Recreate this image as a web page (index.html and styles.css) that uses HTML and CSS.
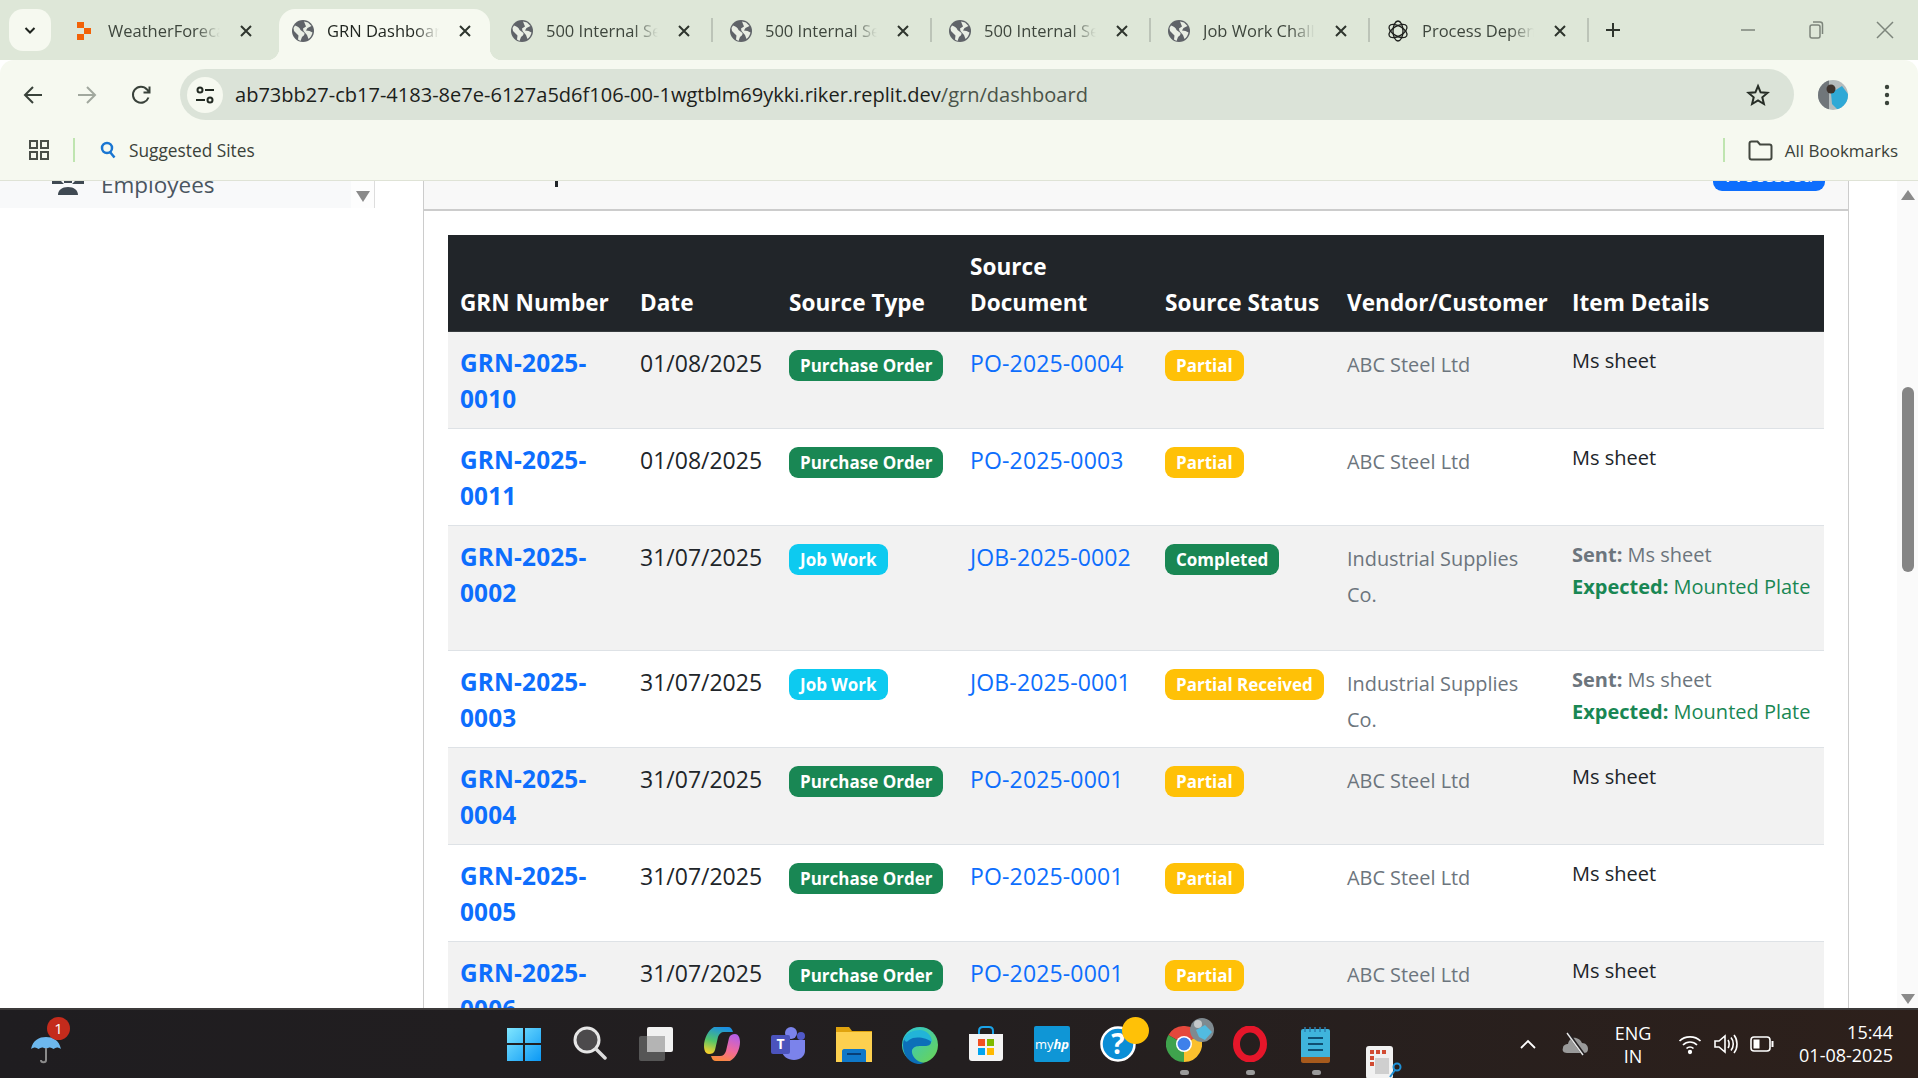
FILE: index.html
```html
<!DOCTYPE html>
<html lang="en">
<head>
  <meta charset="UTF-8">
  <meta name="viewport" content="width=device-width, initial-scale=1.0">
  <title>GRN Dashboard</title>
  <link rel="stylesheet" href="styles.css">
</head>
<body>

  <svg class="defs" width="0" height="0">
    <symbol id="globe" viewBox="0 0 22 22">
      <circle cx="11" cy="11" r="11" fill="#5f6368"/>
      <path d="M3 5.500C5.500 6 8 8 8.500 10L12.500 13C13 15 11 16 10 17L8.500 21L6 19.500L6.500 15.500L2 11L1.500 8ZM12 1.500L16 2.500L19.500 6L15.500 8L14 10.500L17.500 11L20.500 12.500C20 15 18.500 17.500 16.500 19L15 15L11.500 11L11 8.500L14 6.500Z" fill="#e9eee4"/>
    </symbol>
    <symbol id="close" viewBox="0 0 14 14">
      <path d="M2 2L12 12M12 2L2 12" stroke="#2e352d" stroke-width="2" fill="none"/>
    </symbol>
  </svg>

  <!-- Tab strip -->
  <div class="tabstrip">
    <div class="tab-search">
      <svg width="14" height="14" viewBox="0 0 14 14"><path d="M2.500 5L7 9.500L11.500 5" stroke="#1f241e" stroke-width="2" fill="none"/></svg>
    </div>
    <div class="tab">
      <svg class="tab-icon" width="22" height="22" viewBox="0 0 22 22"><path d="M4 2H11V8H18V14H11V20H4V14H11V8H4Z" fill="#f26207"/></svg>
      <span class="tab-title">WeatherForecast</span>
      <svg class="tab-close" width="14" height="14"><use href="#close"/></svg>
    </div>
    <div class="tab tab-active">
      <svg class="tab-icon" width="22" height="22"><use href="#globe"/></svg>
      <span class="tab-title">GRN Dashboard</span>
      <svg class="tab-close" width="14" height="14"><use href="#close"/></svg>
    </div>
    <div class="tab tab-sep">
      <svg class="tab-icon" width="22" height="22"><use href="#globe"/></svg>
      <span class="tab-title">500 Internal Server</span>
      <svg class="tab-close" width="14" height="14"><use href="#close"/></svg>
    </div>
    <div class="tab tab-sep">
      <svg class="tab-icon" width="22" height="22"><use href="#globe"/></svg>
      <span class="tab-title">500 Internal Server</span>
      <svg class="tab-close" width="14" height="14"><use href="#close"/></svg>
    </div>
    <div class="tab tab-sep">
      <svg class="tab-icon" width="22" height="22"><use href="#globe"/></svg>
      <span class="tab-title">500 Internal Server</span>
      <svg class="tab-close" width="14" height="14"><use href="#close"/></svg>
    </div>
    <div class="tab tab-sep">
      <svg class="tab-icon" width="22" height="22"><use href="#globe"/></svg>
      <span class="tab-title">Job Work Challan</span>
      <svg class="tab-close" width="14" height="14"><use href="#close"/></svg>
    </div>
    <div class="tab tab-sep">
      <svg class="tab-icon" width="22" height="22" viewBox="0 0 22 22" fill="none" stroke="#1d1f1c" stroke-width="1.300">
        <ellipse cx="11" cy="11" rx="5" ry="10"/>
        <ellipse cx="11" cy="11" rx="5" ry="10" transform="rotate(60 11 11)"/>
        <ellipse cx="11" cy="11" rx="5" ry="10" transform="rotate(120 11 11)"/>
      </svg>
      <span class="tab-title">Process Dependency</span>
      <svg class="tab-close" width="14" height="14"><use href="#close"/></svg>
    </div>
    <svg class="new-tab" width="18" height="18" viewBox="0 0 18 18"><path d="M9 2V16M2 9H16" stroke="#2e352d" stroke-width="2"/></svg>
    <div class="window-btns">
      <svg width="16" height="16" viewBox="0 0 16 16"><path d="M1 8H15" stroke="#7d857b" stroke-width="1.500"/></svg>
      <svg width="16" height="18" viewBox="0 0 16 18" fill="none" stroke="#7d857b" stroke-width="1.500"><rect x="2" y="4" width="10" height="13" rx="2"/><path d="M5 1H12C13.500 1 14.500 2 14.500 3.500V13"/></svg>
      <svg width="18" height="18" viewBox="0 0 18 18"><path d="M1 1L17 17M17 1L1 17" stroke="#7d857b" stroke-width="1.500"/></svg>
    </div>
  </div>

  <!-- Address bar -->
  <div class="toolbar">
    <div class="nav-btns">
      <svg width="22" height="22" viewBox="0 0 22 22" fill="none" stroke="#39423a" stroke-width="2"><path d="M20 11H3M11 3L3 11L11 19"/></svg>
      <svg width="22" height="22" viewBox="0 0 22 22" fill="none" stroke="#a1a89e" stroke-width="2"><path d="M2 11H19M11 3L19 11L11 19"/></svg>
      <svg width="22" height="22" viewBox="0 0 22 22" fill="none" stroke="#39423a" stroke-width="2"><path d="M18.500 13.500A8 8 0 1 1 17 5.500L19 8M19.500 2.500V8.500H13.500"/></svg>
    </div>
    <div class="omnibox">
      <div class="site-info">
        <svg width="20" height="20" viewBox="0 0 20 20" fill="none" stroke="#222a22" stroke-width="2"><circle cx="5" cy="5" r="2.500"/><path d="M10 5H19M1 15H10"/><circle cx="15" cy="15" r="2.500"/></svg>
      </div>
      <span class="url">ab73bb27-cb17-4183-8e7e-6127a5d6f106-00-1wgtblm69ykki.riker.replit.dev<span class="url-path">/grn/dashboard</span></span>
      <svg class="star" width="24" height="24" viewBox="0 0 24 24"><path d="M12 3L14.600 9.300L21.500 9.900L16.300 14.300L17.900 21L12 17.400L6.100 21L7.700 14.300L2.500 9.900L9.400 9.300Z" fill="none" stroke="#262d26" stroke-width="2"/></svg>
    </div>
    <svg class="avatar" width="30" height="30" viewBox="0 0 30 30">
      <defs><clipPath id="avatarClip"><circle cx="15" cy="15" r="15"/></clipPath></defs>
      <g clip-path="url(#avatarClip)">
        <rect width="30" height="30" fill="#b5bcbd"/>
        <rect width="11" height="30" fill="#70767a"/>
        <path d="M13 13L24 6L30 14V26L20 30L14 24Z" fill="#2fa9d6"/>
        <circle cx="13" cy="9" r="4.500" fill="#3d332d"/>
      </g>
    </svg>
    <svg class="menu-dots" width="6" height="22" viewBox="0 0 6 22"><circle cx="3" cy="3" r="2.200" fill="#3a433a"/><circle cx="3" cy="11" r="2.200" fill="#3a433a"/><circle cx="3" cy="19" r="2.200" fill="#3a433a"/></svg>
  </div>

  <!-- Bookmarks -->
  <div class="bookmarks">
    <svg width="22" height="22" viewBox="0 0 22 22" fill="none" stroke="#4a4f49" stroke-width="2"><rect x="2" y="2" width="7" height="7"/><rect x="13" y="2" width="7" height="7"/><rect x="2" y="13" width="7" height="7"/><rect x="13" y="13" width="7" height="7"/></svg>
    <div class="bm-sep bm-sep-left"></div>
    <svg width="16" height="18" viewBox="0 0 16 18" fill="none" stroke="#1976d2" stroke-width="2.500"><circle cx="7" cy="7" r="5"/><path d="M10 11L14.500 16.500"/></svg>
    <span class="bm-text">Suggested Sites</span>
    <div class="bm-sep bm-sep-right"></div>
    <svg width="25" height="21" viewBox="0 0 25 21" fill="none" stroke="#42473f" stroke-width="2"><path d="M1.500 3.500C1.500 2 2.500 1.500 3.500 1.500H9.500L12 4.500H21.500C23 4.500 23.500 5.500 23.500 6.500V17.500C23.500 19 22.500 19.500 21.500 19.500H3.500C2.500 19.500 1.500 19 1.500 17.500Z"/></svg>
    <span class="bm-text bm-text-all">All Bookmarks</span>
  </div>

  <!-- Page -->
  <div class="page">
    <aside class="sidebar">
      <div class="side-item">
        <div class="side-link">
          <svg width="32" height="14" viewBox="0 0 32 14" fill="#3f4952"><path d="M0 0H9L12 3H0ZM32 0H23L20 3H32ZM12 0H20V2H12ZM6 14C6 9 10 6 16 6C22 6 26 9 26 14Z"/></svg>
          <span>Employees</span>
        </div>
        <div class="side-scroll"></div>
      </div>
    </aside>

    <main class="main">
      <div class="card">
        <div class="card-header">
          <span class="title-tick"></span>
          <button class="btn-primary">Processed</button>
        </div>
        <div class="card-body">
          <table class="grn-table">
            <colgroup>
              <col class="col-grn"><col class="col-date"><col class="col-type"><col class="col-doc"><col class="col-status"><col class="col-vendor"><col>
            </colgroup>
            <thead>
              <tr>
                <th>GRN Number</th>
                <th>Date</th>
                <th>Source Type</th>
                <th>Source<br>Document</th>
                <th>Source Status</th>
                <th>Vendor/Customer</th>
                <th>Item Details</th>
              </tr>
            </thead>
            <tbody>
              <tr>
                <td class="cell-grn"><a href="#">GRN-2025-0010</a></td>
                <td>01/08/2025</td>
                <td><span class="badge badge-green">Purchase Order</span></td>
                <td><a href="#">PO-2025-0004</a></td>
                <td><span class="badge badge-yellow">Partial</span></td>
                <td class="cell-vendor">ABC Steel Ltd</td>
                <td><div class="item-line">Ms sheet</div></td>
              </tr>
              <tr>
                <td class="cell-grn"><a href="#">GRN-2025-0011</a></td>
                <td>01/08/2025</td>
                <td><span class="badge badge-green">Purchase Order</span></td>
                <td><a href="#">PO-2025-0003</a></td>
                <td><span class="badge badge-yellow">Partial</span></td>
                <td class="cell-vendor">ABC Steel Ltd</td>
                <td><div class="item-line">Ms sheet</div></td>
              </tr>
              <tr>
                <td class="cell-grn"><a href="#">GRN-2025-0002</a></td>
                <td>31/07/2025</td>
                <td><span class="badge badge-cyan">Job Work</span></td>
                <td><a href="#">JOB-2025-0002</a></td>
                <td><span class="badge badge-green">Completed</span></td>
                <td class="cell-vendor">Industrial Supplies Co.</td>
                <td>
                  <div class="item-line muted"><strong>Sent:</strong> Ms sheet</div>
                  <div class="item-line expected"><strong>Expected:</strong> Mounted Plate</div>
                  <div class="item-gap"></div>
                </td>
              </tr>
              <tr>
                <td class="cell-grn"><a href="#">GRN-2025-0003</a></td>
                <td>31/07/2025</td>
                <td><span class="badge badge-cyan">Job Work</span></td>
                <td><a href="#">JOB-2025-0001</a></td>
                <td><span class="badge badge-yellow">Partial Received</span></td>
                <td class="cell-vendor">Industrial Supplies Co.</td>
                <td>
                  <div class="item-line muted"><strong>Sent:</strong> Ms sheet</div>
                  <div class="item-line expected"><strong>Expected:</strong> Mounted Plate</div>
                </td>
              </tr>
              <tr>
                <td class="cell-grn"><a href="#">GRN-2025-0004</a></td>
                <td>31/07/2025</td>
                <td><span class="badge badge-green">Purchase Order</span></td>
                <td><a href="#">PO-2025-0001</a></td>
                <td><span class="badge badge-yellow">Partial</span></td>
                <td class="cell-vendor">ABC Steel Ltd</td>
                <td><div class="item-line">Ms sheet</div></td>
              </tr>
              <tr>
                <td class="cell-grn"><a href="#">GRN-2025-0005</a></td>
                <td>31/07/2025</td>
                <td><span class="badge badge-green">Purchase Order</span></td>
                <td><a href="#">PO-2025-0001</a></td>
                <td><span class="badge badge-yellow">Partial</span></td>
                <td class="cell-vendor">ABC Steel Ltd</td>
                <td><div class="item-line">Ms sheet</div></td>
              </tr>
              <tr>
                <td class="cell-grn"><a href="#">GRN-2025-0006</a></td>
                <td>31/07/2025</td>
                <td><span class="badge badge-green">Purchase Order</span></td>
                <td><a href="#">PO-2025-0001</a></td>
                <td><span class="badge badge-yellow">Partial</span></td>
                <td class="cell-vendor">ABC Steel Ltd</td>
                <td><div class="item-line">Ms sheet</div></td>
              </tr>
            </tbody>
          </table>
        </div>
      </div>
    </main>

    <div class="scrollbar">
      <span class="arrow-up"></span>
      <span class="thumb"></span>
      <span class="arrow-down"></span>
    </div>
  </div>

  <!-- Taskbar -->
  <footer class="taskbar">
    <div class="weather">
      <svg width="32" height="32" viewBox="0 0 32 32">
        <path d="M1 17C3 8 9 5 16 5C23 5 29 8 31 17C28 15 26 15 23.500 17C21 15 19 15 16 17C13 15 11 15 8.500 17C6 15 4 15 1 17Z" fill="#6db8ee"/>
        <path d="M16 16V28C16 31 11 31 11 28" stroke="#8a8a8a" stroke-width="2" fill="none"/>
      </svg>
      <span class="weather-badge">1</span>
    </div>

    <div class="apps">
      <div class="app">
        <svg width="36" height="36" viewBox="0 0 36 36">
          <defs><linearGradient id="winGrad" x1="0" y1="0" x2="1" y2="1"><stop offset="0" stop-color="#7fe6ff"/><stop offset="1" stop-color="#0b98f5"/></linearGradient></defs>
          <path d="M1 2H17V17H1ZM19 2H35V17H19ZM1 19H17V35H1ZM19 19H35V35H19Z" fill="url(#winGrad)"/>
        </svg>
      </div>
      <div class="app">
        <svg width="34" height="34" viewBox="0 0 34 34" fill="none"><circle cx="14" cy="14" r="12" fill="#4c4a4c" stroke="#e6e6e6" stroke-width="3"/><path d="M23 23L32 32" stroke="#dcdcdc" stroke-width="3.500" stroke-linecap="round"/></svg>
      </div>
      <div class="app">
        <svg width="36" height="36" viewBox="0 0 36 36"><rect x="9" y="1" width="26" height="25" rx="2" fill="#f1f1f1"/><rect x="1" y="10" width="26" height="25" rx="2" fill="#5c5c5c" fill-opacity="0.900"/><rect x="9" y="10" width="18" height="16" fill="#b4b4b4"/></svg>
      </div>
      <div class="app">
        <svg width="36" height="36" viewBox="0 0 36 36">
          <defs>
            <linearGradient id="copLeft" x1="0.600" y1="0" x2="0.300" y2="1"><stop offset="0" stop-color="#1b8fe2"/><stop offset="0.550" stop-color="#52c46a"/><stop offset="1" stop-color="#f5d02c"/></linearGradient>
            <linearGradient id="copRight" x1="0.700" y1="0" x2="0.300" y2="1"><stop offset="0" stop-color="#b45fe6"/><stop offset="0.550" stop-color="#f26a9a"/><stop offset="1" stop-color="#f98a3c"/></linearGradient>
          </defs>
          <path d="M10 1H24C27 1 28 3 29 6H20C17 6 15 8 14 11L11 24C10 27 8 28 5 28C2 28 0 25 0 20C0 13 4 4 10 1Z" fill="url(#copLeft)"/>
          <path d="M26 35H12C9 35 8 33 7 30H16C19 30 21 28 22 25L25 12C26 9 28 8 31 8C34 8 36 11 36 16C36 23 32 32 26 35Z" fill="url(#copRight)"/>
        </svg>
      </div>
      <div class="app">
        <svg width="36" height="36" viewBox="0 0 36 36"><circle cx="21" cy="7" r="6" fill="#7b83eb"/><circle cx="31" cy="10" r="4" fill="#5059c9"/><path d="M12 14H35V25C35 30 30 34 24 34C18 34 12 30 12 25Z" fill="#7b83eb"/><rect x="1" y="9" width="19" height="19" rx="2" fill="#4b53bc"/><text class="teams-t" x="10.500" y="23">T</text></svg>
      </div>
      <div class="app">
        <svg width="36" height="36" viewBox="0 0 36 36"><path d="M0 1H13L16 5H36V12H0Z" fill="#e0a30e"/><rect y="6" width="36" height="30" fill="#fdd04f"/><path d="M6 36V25C6 24 7 23 8 23H28C29 23 30 24 30 25V36Z" fill="#0f78c9"/><rect x="11" y="27" width="14" height="2" fill="#083f76"/></svg>
      </div>
      <div class="app">
        <svg width="38" height="38" viewBox="0 0 38 38">
          <defs><linearGradient id="edgeGrad" x1="0" y1="0" x2="1" y2="1"><stop offset="0" stop-color="#29c6dc"/><stop offset="1" stop-color="#6ed44d"/></linearGradient></defs>
          <circle cx="19" cy="19" r="18" fill="url(#edgeGrad)"/>
          <path d="M2 19C2 10 9 5 17 5C25 5 30 10 30 16C30 19 27 20 24 20C19 20 13 19 11 24C10 29 15 36 23 37C20 38 18 38 17 38C8 37 2 29 2 19Z" fill="#0c6fb8"/>
          <path d="M3 13C6 7 12 4 19 4C25 4 31 9 31 16C26 12 14 9 8 14C6 16 5 17 3 13Z" fill="#22b4d8"/>
        </svg>
      </div>
      <div class="app">
        <svg width="36" height="36" viewBox="0 0 36 36"><path d="M11 10V5C11 2 13 1 15 1H21C23 1 25 2 25 5V10" fill="none" stroke="#1aa3e8" stroke-width="2"/><path d="M1 8H35V32C35 34 34 35 32 35H4C2 35 1 34 1 32Z" fill="#f4f4f4"/><rect x="10" y="13" width="7" height="7" fill="#f25022"/><rect x="19" y="13" width="7" height="7" fill="#7fba00"/><rect x="10" y="22" width="7" height="7" fill="#00a4ef"/><rect x="19" y="22" width="7" height="7" fill="#ffb900"/></svg>
      </div>
      <div class="app">
        <div class="myhp"><span class="myhp-my">my</span><span class="myhp-hp">hp</span></div>
      </div>
      <div class="app">
        <svg width="36" height="36" viewBox="0 0 36 36"><circle cx="18" cy="18" r="16.500" fill="#0b8ed6" stroke="#fff" stroke-width="2.500"/><text class="help-q" x="18" y="28">?</text></svg>
        <span class="help-dot"></span>
      </div>
      <div class="app app-running">
        <svg width="36" height="36" viewBox="0 0 36 36"><path d="M18 18L2.400 9A18 18 0 0 1 33.600 9Z" fill="#e5483c"/><path d="M18 18L33.600 9A18 18 0 0 1 18 36Z" fill="#fbc02d"/><path d="M18 18L18 36A18 18 0 0 1 2.400 9Z" fill="#3fa34d"/><circle cx="18" cy="18" r="8" fill="#fff"/><circle cx="18" cy="18" r="6.500" fill="#3f80ea"/></svg>
        <svg class="chrome-face" width="24" height="24" viewBox="0 0 24 24"><circle cx="12" cy="12" r="12" fill="#7f8a90"/><path d="M6 12L15 7L22 14L15 22L9 19Z" fill="#52bbe0"/><circle cx="8" cy="6" r="4" fill="#c5c9ca"/></svg>
      </div>
      <div class="app app-running">
        <svg width="34" height="36" viewBox="0 0 34 36"><ellipse cx="17" cy="18" rx="13.500" ry="15" fill="none" stroke="#e5162a" stroke-width="7"/></svg>
      </div>
      <div class="app app-running">
        <svg width="30" height="38" viewBox="0 0 30 38"><rect y="3" width="29" height="30" rx="2" fill="#3fb4dc"/><path d="M0 31H29V35C29 36 28 37 27 37H2C1 37 0 36 0 35Z" fill="#a75a1c"/><path d="M7 12H22M7 18H22M7 24H22" stroke="#0f4f72" stroke-width="2"/><path d="M4 1V6M9 1V6M14 1V6M19 1V6M24 1V6" stroke="#2b7fb0" stroke-width="1.500"/></svg>
      </div>
      <div class="app app-snip">
        <svg width="36" height="34" viewBox="0 0 36 34"><rect x="0" y="1" width="27" height="33" rx="3" fill="#f1f1f1"/><path d="M4 5H8V9H4ZM10 5H14V9H10ZM16 5H20V9H16ZM4 11H8V15H4ZM4 17H8V21H4Z" fill="#d14b32"/><rect x="9" y="13" width="14" height="16" fill="#cfcfcf"/><circle cx="31" cy="22" r="3.500" fill="none" stroke="#1e90d6" stroke-width="2"/><path d="M29 25L24 32" stroke="#1e90d6" stroke-width="2"/></svg>
      </div>
    </div>

    <div class="tray">
      <svg width="18" height="12" viewBox="0 0 18 12"><path d="M2 10L9 3L16 10" fill="none" stroke="#fff" stroke-width="1.800"/></svg>
      <svg class="tray-cloud" width="28" height="24" viewBox="0 0 28 24"><path d="M6 21C2 21 1 18 2 16C2 13 5 12 7 12C8 7 12 5 15 6C19 7 20 9 21 11C25 11 27 14 27 17C27 20 25 21 23 21Z" fill="#9a9a9a"/><path d="M7 1L23 23" stroke="#242022" stroke-width="3"/><path d="M6 1L22 23" stroke="#e8e8e8" stroke-width="1.400"/></svg>
      <div class="tray-lang"><div>ENG</div><div>IN</div></div>
      <div class="tray-icons">
        <svg width="24" height="22" viewBox="0 0 24 22" fill="none" stroke="#fff" stroke-width="1.700"><path d="M1.500 8C7 2.500 17 2.500 22.500 8M5 12C9 8 15 8 19 12M8.500 15.500C10.500 13.500 13.500 13.500 15.500 15.500"/><circle cx="12" cy="19" r="1.300" fill="#fff"/></svg>
        <svg width="26" height="22" viewBox="0 0 26 22" fill="none" stroke="#fff" stroke-width="1.600"><path d="M2 8H6L12 3V19L6 14H2Z"/><path d="M15 7C16.500 9 16.500 13 15 15M18 4.500C21 8 21 14 18 17.500M21 2C25 7 25 15 21 20"/></svg>
        <svg width="24" height="16" viewBox="0 0 24 16" fill="none"><rect x="1" y="1" width="19" height="14" rx="3" stroke="#fff" stroke-width="1.600"/><rect x="3.500" y="3.500" width="6" height="9" fill="#fff"/><path d="M22.500 5V11" stroke="#fff" stroke-width="2"/></svg>
      </div>
      <div class="tray-clock"><div>15:44</div><div>01-08-2025</div></div>
    </div>
  </footer>

</body>
</html>
```

FILE: styles.css
```css
* {
  box-sizing: border-box;
}

body {
  margin: 0;
  width: 1918px;
  height: 1078px;
  overflow: hidden;
  display: flex;
  flex-direction: column;
  font-family: "Open Sans", "Noto Sans", sans-serif;
  background-color: #fff;
}

.defs {
  position: absolute;
}

/* Tab strip */
.tabstrip {
  height: 60px;
  flex-shrink: 0;
  display: flex;
  align-items: flex-end;
  background-color: #dee7d8;
  padding-left: 9px;
}

.tab-search {
  width: 42px;
  height: 42px;
  margin: 0 9px 9px 0;
  border-radius: 14px;
  background-color: #f6f9f0;
  display: flex;
  align-items: center;
  justify-content: center;
}

.tab {
  position: relative;
  width: 211px;
  height: 51px;
  margin-right: 8px;
  padding: 0 18px 8px 13px;
  display: flex;
  align-items: center;
  font-size: 16.5px;
  color: #3e463d;
  flex-shrink: 0;
}

.tab-active {
  background-color: #f6f9f0;
  border-radius: 16px 16px 0 0;
  color: #1f241e;
}

.tab-active::before,
.tab-active::after {
  content: "";
  position: absolute;
  bottom: 0;
  width: 12px;
  height: 12px;
  background: radial-gradient(circle at 0 0, transparent 12px, #f6f9f0 12.5px);
}

.tab-active::before {
  left: -12px;
}

.tab-active::after {
  right: -12px;
  background: radial-gradient(circle at 100% 0, transparent 12px, #f6f9f0 12.5px);
}

.tab-sep::after {
  content: "";
  position: absolute;
  right: -4px;
  top: 9px;
  width: 2px;
  height: 24px;
  background-color: #bcc4b8;
}

.tab-icon {
  flex-shrink: 0;
}

.tab-title {
  width: 112px;
  margin: 0 19px 0 13px;
  white-space: nowrap;
  overflow: hidden;
  -webkit-mask-image: linear-gradient(to right, #000 78%, transparent);
  mask-image: linear-gradient(to right, #000 78%, transparent);
}

.tab-close {
  flex-shrink: 0;
}

.new-tab {
  margin: 0 0 21px 11px;
}

.window-btns {
  display: flex;
  align-items: center;
  gap: 52px;
  margin-left: 118px;
  height: 42px;
  margin-bottom: 9px;
}

/* Address bar */
.toolbar {
  height: 60px;
  flex-shrink: 0;
  background-color: #f6f9f0;
  border-radius: 14px 14px 0 0;
  display: flex;
  align-items: center;
  padding: 9px 15px 0 22px;
}

.nav-btns {
  display: flex;
  gap: 32px;
  width: 158px;
}

.omnibox {
  width: 1614px;
  height: 51px;
  border-radius: 26px;
  background-color: #dbe3d8;
  display: flex;
  align-items: center;
  padding: 0 24px 0 7px;
}

.site-info {
  width: 36px;
  height: 36px;
  border-radius: 50%;
  background-color: #f6f9f0;
  display: flex;
  align-items: center;
  justify-content: center;
  flex-shrink: 0;
}

.url {
  margin-left: 12px;
  font-size: 20.05px;
  color: #1b211b;
  white-space: nowrap;
  flex: 1;
}

.url-path {
  color: #4a5349;
}

.avatar {
  margin-left: 24px;
}

.menu-dots {
  margin-left: 36px;
}

/* Bookmarks */
.bookmarks {
  height: 61px;
  flex-shrink: 0;
  background-color: #f6f9f0;
  border-bottom: 1px solid #dfe3d6;
  display: flex;
  align-items: center;
  padding-left: 28px;
  font-size: 17.3px;
  color: #3a4139;
}

.bm-sep {
  width: 2px;
  height: 24px;
  background-color: #bfe5b0;
}

.bm-sep-left {
  margin: 0 25px 0 23px;
}

.bm-text {
  margin-left: 13px;
}

.bm-sep-right {
  margin: 0 23px 0 auto;
}

.bm-text-all {
  margin: 0 20px 0 12px;
  font-size: 17px;
}

/* Page */
.page {
  height: 827px;
  flex-shrink: 0;
  display: flex;
  overflow: hidden;
}

.sidebar {
  width: 375px;
  flex-shrink: 0;
}

.side-item {
  height: 27px;
  display: flex;
  justify-content: space-between;
  border-right: 1px solid #ddd;
  overflow: hidden;
}

.side-link {
  width: 351px;
  height: 27px;
  background-color: #f8f9fa;
  display: flex;
  align-items: flex-end;
  padding-left: 52px;
  font-size: 22.5px;
  line-height: 30px;
  color: #4a5560;
}

.side-link svg {
  margin-bottom: 13px;
  flex-shrink: 0;
}

.side-link span {
  margin-left: 17px;
  margin-bottom: 8px;
}

.side-scroll {
  width: 23px;
  padding: 10px 0 0 5px;
  background-color: #fdfdfd;
}

.side-scroll::before {
  content: "";
  display: block;
  width: 0;
  height: 0;
  border-left: 7px solid transparent;
  border-right: 7px solid transparent;
  border-top: 11px solid #8a8a8a;
}

.main {
  width: 1522px;
  flex-shrink: 0;
  padding: 0 48px;
}

.card {
  width: 1426px;
  border-left: 1px solid #ccc;
  border-right: 1px solid #ccc;
}

.card-header {
  position: relative;
  height: 30px;
  padding: 0 23px 18px 0;
  background-color: #f8f8f8;
  border-bottom: 2px solid #ccc;
  display: flex;
  justify-content: flex-end;
  align-items: flex-end;
  overflow: hidden;
}

.title-tick {
  position: absolute;
  left: 131px;
  top: 0;
  width: 3px;
  height: 6px;
  background-color: #212529;
}

.btn-primary {
  width: 112px;
  height: 44px;
  flex-shrink: 0;
  padding: 12px 0 0;
  border: none;
  border-radius: 9px;
  background-color: #0d6efd;
  color: #fff;
  font-family: inherit;
  font-size: 18px;
  line-height: 28px;
  font-weight: 600;
}

.card-body {
  padding: 24px 23px 24px 24px;
}

/* GRN table */
.grn-table {
  width: 1376px;
  table-layout: fixed;
  border-collapse: collapse;
  font-size: 23px;
  line-height: 36px;
  color: #212529;
}

.col-grn { width: 180px; }
.col-date { width: 149px; }
.col-type { width: 181px; }
.col-doc { width: 195px; }
.col-status { width: 182px; }
.col-vendor { width: 225px; }

.grn-table th {
  padding: 14px 12px 10px;
  text-align: left;
  vertical-align: bottom;
  background-color: #212529;
  color: #fff;
  font-weight: 700;
  font-size: 22.6px;
  white-space: nowrap;
  border-bottom: 1px solid #373b3e;
}

.grn-table td {
  padding: 13px 12px 11px;
  vertical-align: top;
  border-bottom: 1px solid #dee2e6;
}

.grn-table tbody tr:nth-child(odd) td {
  background-color: #f2f2f2;
}

.grn-table a {
  color: #0d6efd;
  text-decoration: none;
  letter-spacing: 0.15px;
}

.grn-table .cell-grn {
  font-size: 24.4px;
  font-weight: 700;
}

.grn-table .cell-vendor {
  padding: 15px 12px 9px;
  font-size: 19.9px;
  color: #6c757d;
}

.muted {
  color: #6c757d;
}

.item-line {
  font-size: 20px;
  line-height: 31.5px;
}

.item-gap {
  height: 37px;
}

.expected {
  color: #198754;
}

.badge {
  display: inline-block;
  padding: 6px 11px;
  border-radius: 9px;
  font-size: 17px;
  font-weight: 700;
  line-height: 19px;
  color: #fff;
  white-space: nowrap;
  vertical-align: 0;
}

.badge-green { background-color: #198754; }
.badge-yellow { background-color: #ffc107; }
.badge-cyan { background-color: #0dcaf0; }

/* Scrollbar */
.scrollbar {
  width: 21px;
  flex-shrink: 0;
  background-color: #fafafa;
  display: flex;
  flex-direction: column;
  align-items: center;
  padding-top: 9px;
}

.arrow-up,
.arrow-down {
  width: 0;
  height: 0;
  border-left: 7px solid transparent;
  border-right: 7px solid transparent;
}

.arrow-up {
  border-bottom: 10px solid #8a8a8a;
}

.arrow-down {
  border-top: 10px solid #8a8a8a;
  margin-top: 422px;
}

.thumb {
  width: 12px;
  height: 185px;
  margin-top: 187px;
  border-radius: 6px;
  background-color: #858585;
}

/* Taskbar */
.taskbar {
  height: 70px;
  flex-shrink: 0;
  display: flex;
  align-items: center;
  background: linear-gradient(to right, #1f1d20, #231f20 50%, #2d201b);
  border-top: 2px solid #3c3a3a;
  color: #fff;
}

.weather {
  position: relative;
  width: 490px;
  padding: 12px 0 0 30px;
  flex-shrink: 0;
}

.weather-badge {
  position: absolute;
  left: 47px;
  top: -3px;
  width: 23px;
  height: 23px;
  border-radius: 50%;
  background-color: #c42b1c;
  font-size: 15px;
  line-height: 23px;
  text-align: center;
}

.apps {
  display: flex;
  width: 992px;
  padding-left: 1px;
  flex-shrink: 0;
}

.app {
  position: relative;
  width: 66px;
  height: 62px;
  padding-top: 13px;
  display: flex;
  justify-content: center;
  flex-shrink: 0;
}

.app-running::after {
  content: "";
  position: absolute;
  bottom: 0;
  left: 29px;
  width: 9px;
  height: 5px;
  border-radius: 3px;
  background-color: #9a9a9a;
}

.app-snip {
  padding: 32px 0 0 3px;
}

.teams-t {
  fill: #fff;
  font-size: 14px;
  font-weight: 700;
  text-anchor: middle;
}

.help-q {
  fill: #fff;
  font-size: 28px;
  font-weight: 700;
  text-anchor: middle;
}

.help-dot {
  position: absolute;
  right: 2px;
  top: 4px;
  width: 27px;
  height: 27px;
  border-radius: 50%;
  background-color: #ffc107;
}

.chrome-face {
  position: absolute;
  right: 3px;
  top: 5px;
}

.myhp {
  width: 36px;
  height: 36px;
  background-color: #0f96d6;
  border-radius: 2px;
  display: flex;
  align-items: center;
  justify-content: center;
  font-size: 13px;
}

.myhp-hp {
  font-style: italic;
  font-weight: 700;
}

.tray {
  display: flex;
  align-items: center;
  flex: 1;
  padding-left: 37px;
  font-size: 18px;
  line-height: 23px;
}

.tray-cloud {
  margin-left: 24px;
}

.tray-lang {
  width: 40px;
  margin-left: 24px;
  text-align: center;
  padding-top: 1px;
}

.tray-icons {
  display: flex;
  align-items: center;
  gap: 11px;
  margin-left: 25px;
}

.tray-clock {
  width: 122px;
  margin-left: -3px;
  text-align: right;
}
```
